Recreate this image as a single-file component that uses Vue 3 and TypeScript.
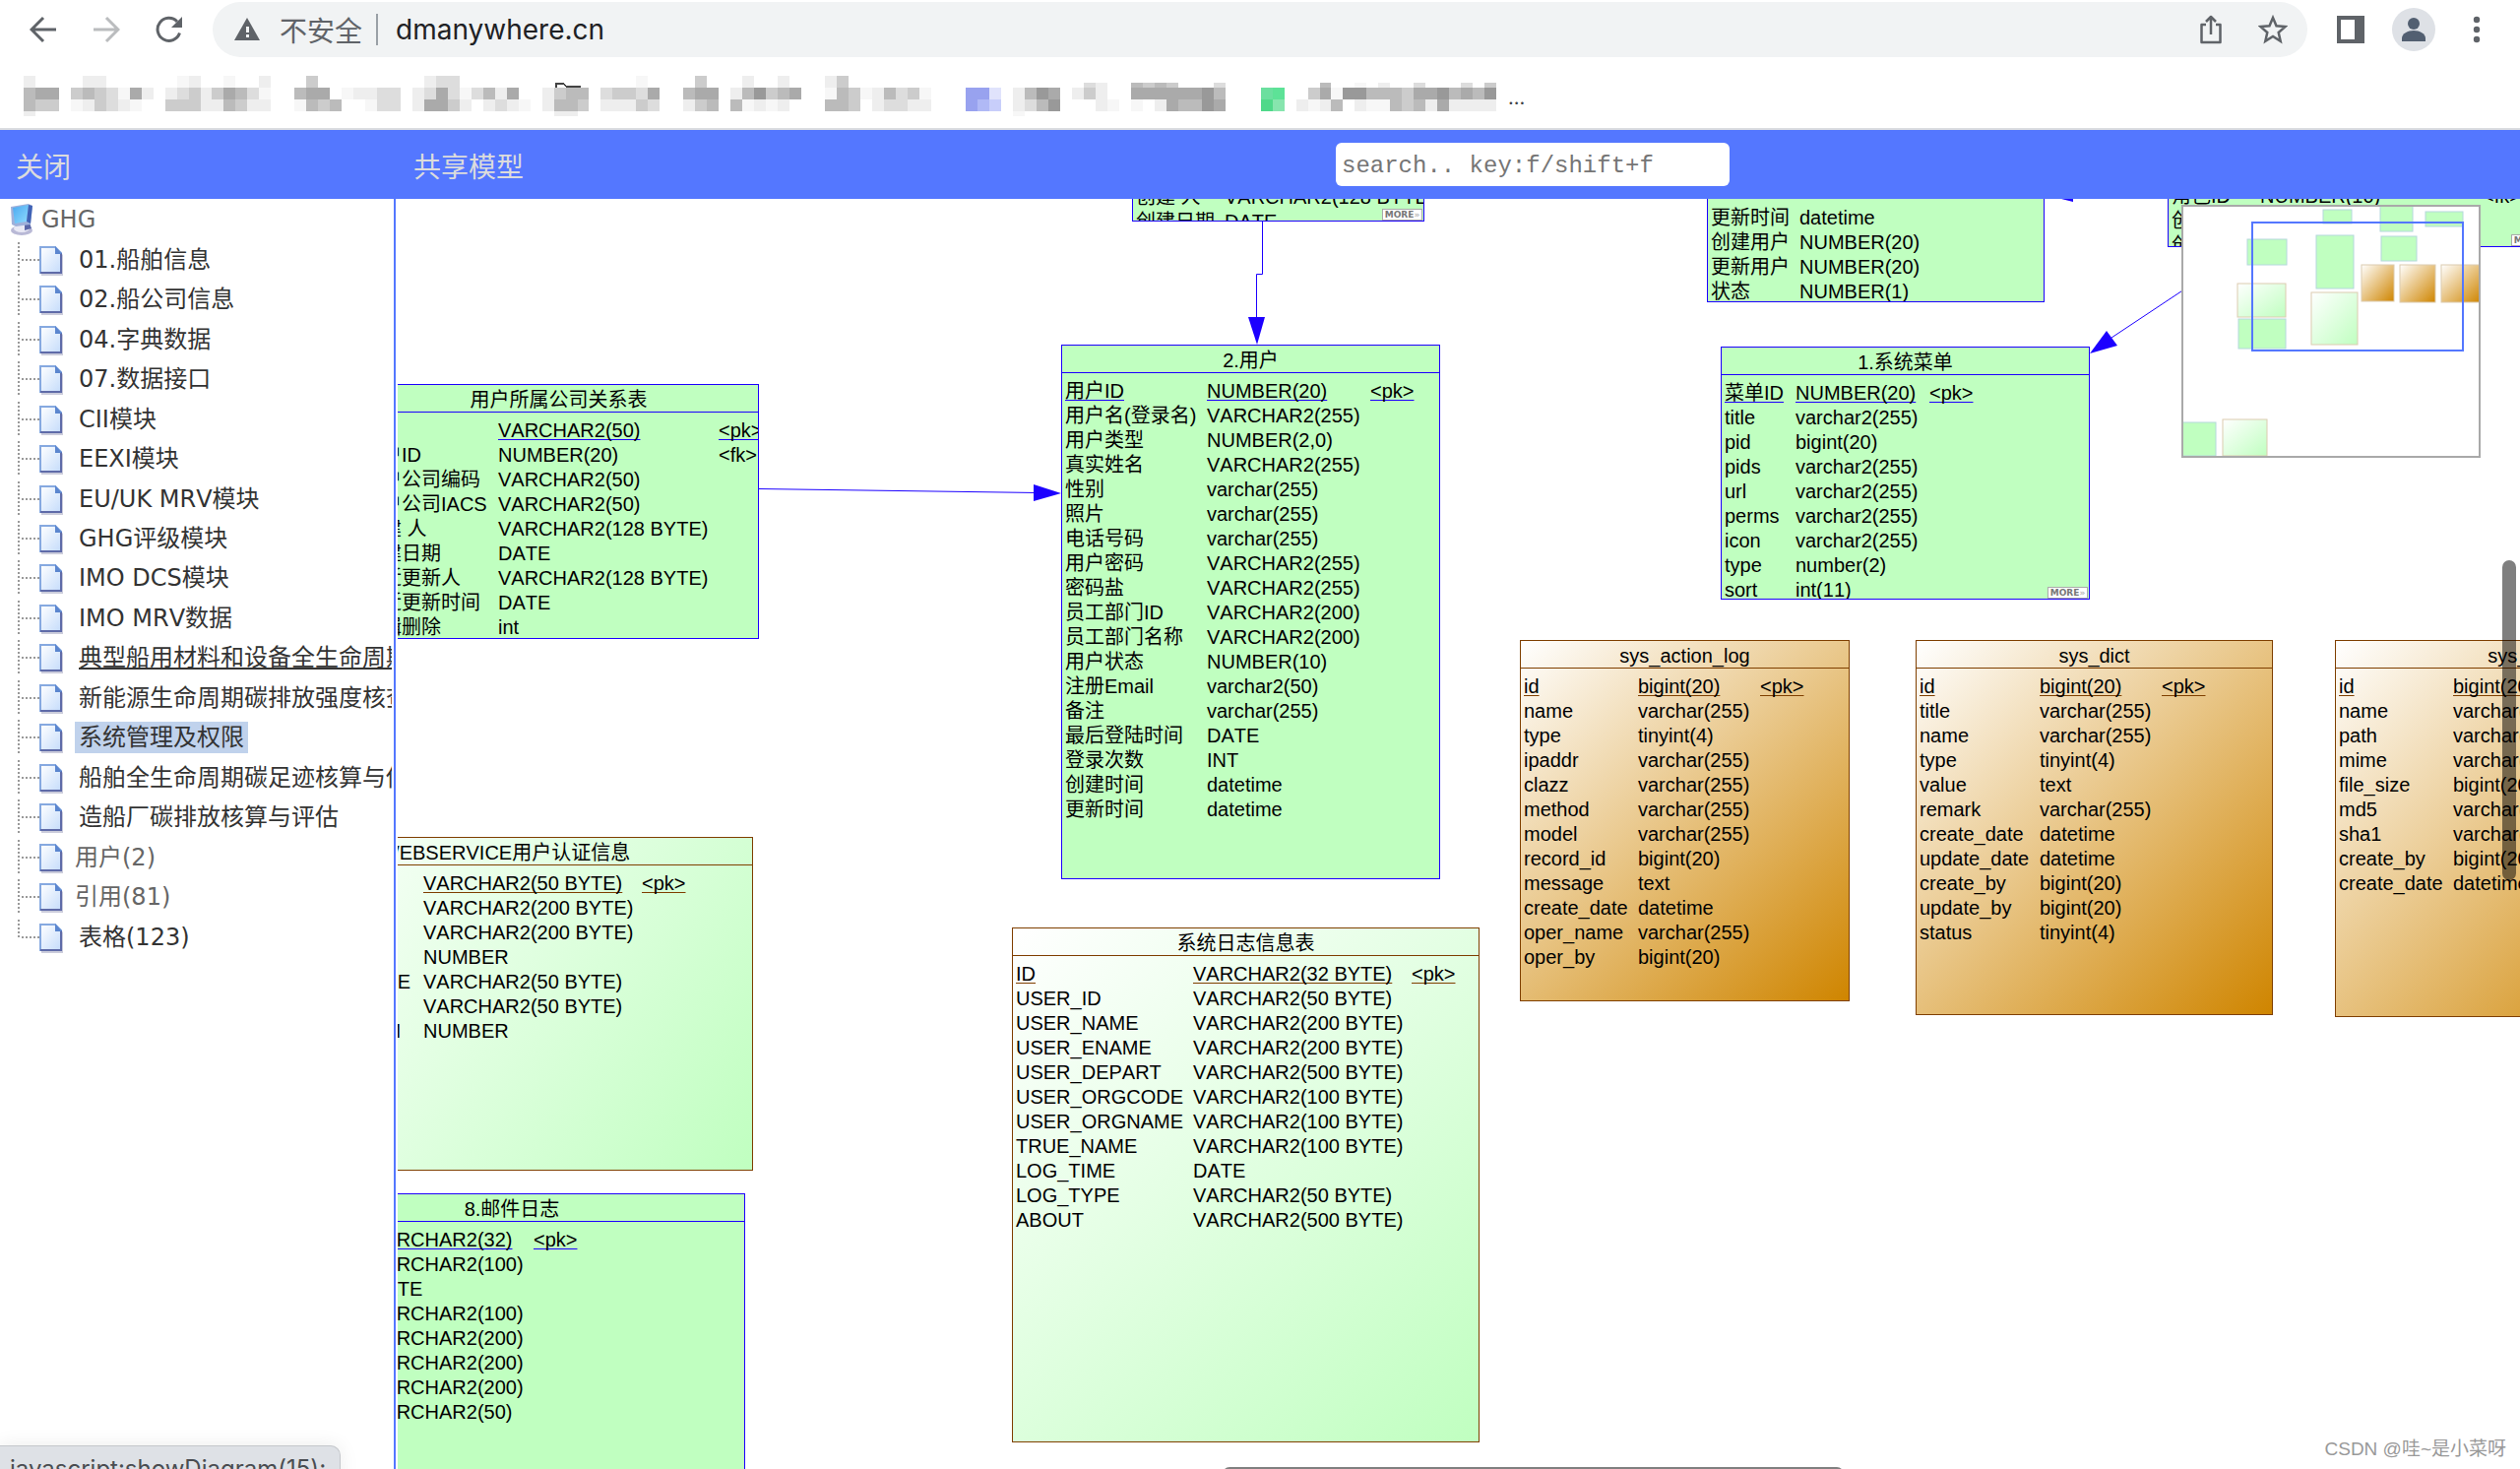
<script setup lang="ts">
interface Entity {
  title: string
  x: number
  y: number
  w: number
  h: number
  nameCol: number
  typeCol: number
  tone: 'green' | 'mint' | 'amber'
  more?: boolean
  rows: string[][]
}

interface TreeItem {
  label: string
  kind: 'link' | 'hover' | 'active' | 'plain'
}

const tree: TreeItem[] = [
  { label: '01.船舶信息', kind: 'link' },
  { label: '02.船公司信息', kind: 'link' },
  { label: '04.字典数据', kind: 'link' },
  { label: '07.数据接口', kind: 'link' },
  { label: 'CII模块', kind: 'link' },
  { label: 'EEXI模块', kind: 'link' },
  { label: 'EU/UK MRV模块', kind: 'link' },
  { label: 'GHG评级模块', kind: 'link' },
  { label: 'IMO DCS模块', kind: 'link' },
  { label: 'IMO MRV数据', kind: 'link' },
  { label: '典型船用材料和设备全生命周期', kind: 'hover' },
  { label: '新能源生命周期碳排放强度核查', kind: 'link' },
  { label: '系统管理及权限', kind: 'active' },
  { label: '船舶全生命周期碳足迹核算与估', kind: 'link' },
  { label: '造船厂碳排放核算与评估', kind: 'link' },
  { label: '用户(2)', kind: 'plain' },
  { label: '引用(81)', kind: 'plain' },
  { label: '表格(123)', kind: 'link' },
]

const entities: Entity[] = [
  {
    title: '用户所属公司关系表', x: -40, y: 188, w: 407, h: 259, nameCol: 138, typeCol: 224, tone: 'green',
    rows: [
      ['ID', 'VARCHAR2(50)', '<pk>'], ['用户ID', 'NUMBER(20)', '<fk>'], ['用户公司编码', 'VARCHAR2(50)'],
      ['用户公司IACS', 'VARCHAR2(50)'], ['创建 人', 'VARCHAR2(128 BYTE)'], ['创建日期', 'DATE'],
      ['最近更新人', 'VARCHAR2(128 BYTE)'], ['最近更新时间', 'DATE'], ['逻辑删除', 'int'],
    ],
  },
  {
    title: 'WEBSERVICE用户认证信息', x: -142, y: 648, w: 503, h: 339, nameCol: 164, typeCol: 222, tone: 'mint',
    rows: [
      ['ID', 'VARCHAR2(50 BYTE)', '<pk>'], ['', 'VARCHAR2(200 BYTE)'], ['', 'VARCHAR2(200 BYTE)'], ['', 'NUMBER'],
      ['SERVICE_TYPE', 'VARCHAR2(50 BYTE)'], ['', 'VARCHAR2(50 BYTE)'], ['ACCESS_ITEM', 'NUMBER'],
    ],
  },
  {
    title: '8.邮件日志', x: -121, y: 1010, w: 474, h: 400, nameCol: 89, typeCol: 166, tone: 'green',
    rows: [
      ['ID', 'VARCHAR2(32)', '<pk>'], ['', 'VARCHAR2(100)'], ['', 'DATE'], ['', 'VARCHAR2(100)'],
      ['', 'VARCHAR2(200)'], ['', 'VARCHAR2(200)'], ['', 'VARCHAR2(200)'], ['', 'VARCHAR2(50)'],
    ],
  },
  {
    title: '2.用户', x: 674, y: 148, w: 385, h: 543, nameCol: 144, typeCol: 166, tone: 'green',
    rows: [
      ['用户ID', 'NUMBER(20)', '<pk>'], ['用户名(登录名)', 'VARCHAR2(255)'], ['用户类型', 'NUMBER(2,0)'],
      ['真实姓名', 'VARCHAR2(255)'], ['性别', 'varchar(255)'], ['照片', 'varchar(255)'], ['电话号码', 'varchar(255)'],
      ['用户密码', 'VARCHAR2(255)'], ['密码盐', 'VARCHAR2(255)'], ['员工部门ID', 'VARCHAR2(200)'],
      ['员工部门名称', 'VARCHAR2(200)'], ['用户状态', 'NUMBER(10)'], ['注册Email', 'varchar2(50)'],
      ['备注', 'varchar(255)'], ['最后登陆时间', 'DATE'], ['登录次数', 'INT'], ['创建时间', 'datetime'], ['更新时间', 'datetime'],
    ],
  },
  {
    title: '', x: 746, y: -49, w: 297, h: 72, nameCol: 90, typeCol: 190, tone: 'green', more: true,
    rows: [['创建 人', 'VARCHAR2(128 BYTE)'], ['创建日期', 'DATE']],
  },
  {
    title: '', x: 1330, y: -53, w: 343, h: 158, nameCol: 90, typeCol: 190, tone: 'green',
    rows: [['', ''], ['更新时间', 'datetime'], ['创建用户', 'NUMBER(20)'], ['更新用户', 'NUMBER(20)'], ['状态', 'NUMBER(1)']],
  },
  {
    title: '1.系统菜单', x: 1344, y: 150, w: 375, h: 257, nameCol: 72, typeCol: 136, tone: 'green', more: true,
    rows: [
      ['菜单ID', 'NUMBER(20)', '<pk>'], ['title', 'varchar2(255)'], ['pid', 'bigint(20)'], ['pids', 'varchar2(255)'],
      ['url', 'varchar2(255)'], ['perms', 'varchar2(255)'], ['icon', 'varchar2(255)'], ['type', 'number(2)'], ['sort', 'int(11)'],
    ],
  },
  {
    title: '', x: 1798, y: -50, w: 392, h: 99, nameCol: 90, typeCol: 226, tone: 'green', more: true,
    rows: [['角色ID', 'NUMBER(10)', '<fk>'], ['创建时间', ''], ['创建用户', '']],
  },
  {
    title: '系统日志信息表', x: 624, y: 740, w: 475, h: 523, nameCol: 180, typeCol: 222, tone: 'mint',
    rows: [
      ['ID', 'VARCHAR2(32 BYTE)', '<pk>'], ['USER_ID', 'VARCHAR2(50 BYTE)'], ['USER_NAME', 'VARCHAR2(200 BYTE)'],
      ['USER_ENAME', 'VARCHAR2(200 BYTE)'], ['USER_DEPART', 'VARCHAR2(500 BYTE)'], ['USER_ORGCODE', 'VARCHAR2(100 BYTE)'],
      ['USER_ORGNAME', 'VARCHAR2(100 BYTE)'], ['TRUE_NAME', 'VARCHAR2(100 BYTE)'], ['LOG_TIME', 'DATE'],
      ['LOG_TYPE', 'VARCHAR2(50 BYTE)'], ['ABOUT', 'VARCHAR2(500 BYTE)'],
    ],
  },
  {
    title: 'sys_action_log', x: 1140, y: 448, w: 335, h: 367, nameCol: 116, typeCol: 124, tone: 'amber',
    rows: [
      ['id', 'bigint(20)', '<pk>'], ['name', 'varchar(255)'], ['type', 'tinyint(4)'], ['ipaddr', 'varchar(255)'],
      ['clazz', 'varchar(255)'], ['method', 'varchar(255)'], ['model', 'varchar(255)'], ['record_id', 'bigint(20)'],
      ['message', 'text'], ['create_date', 'datetime'], ['oper_name', 'varchar(255)'], ['oper_by', 'bigint(20)'],
    ],
  },
  {
    title: 'sys_dict', x: 1542, y: 448, w: 363, h: 381, nameCol: 122, typeCol: 124, tone: 'amber',
    rows: [
      ['id', 'bigint(20)', '<pk>'], ['title', 'varchar(255)'], ['name', 'varchar(255)'], ['type', 'tinyint(4)'],
      ['value', 'text'], ['remark', 'varchar(255)'], ['create_date', 'datetime'], ['update_date', 'datetime'],
      ['create_by', 'bigint(20)'], ['update_by', 'bigint(20)'], ['status', 'tinyint(4)'],
    ],
  },
  {
    title: 'sys_file', x: 1968, y: 448, w: 377, h: 383, nameCol: 116, typeCol: 124, tone: 'amber',
    rows: [
      ['id', 'bigint(20)', '<pk>'], ['name', 'varchar(255)'], ['path', 'varchar(255)'], ['mime', 'varchar(255)'],
      ['file_size', 'bigint(20)'], ['md5', 'varchar(255)'], ['sha1', 'varchar(255)'], ['create_by', 'bigint(20)'], ['create_date', 'datetime'],
    ],
  },
]

function boxStyle(e: Entity) {
  const style: Record<string, string> = {
    left: e.x + 'px', top: e.y + 'px', width: e.w + 'px', height: e.h + 'px',
  }
  if (e.tone !== 'green') {
    const angle = Math.round(90 + (Math.atan2(e.h, e.w) * 180) / Math.PI)
    style.background = `linear-gradient(${angle}deg, #fff, ${e.tone === 'amber' ? '#cf8500' : '#c0ffc0'})`
  }
  return style
}

// Overview thumbnails: x, y, width, height, fill
const thumbs: [number, number, number, number, string][] = [
  [144, 5, 29, 14, 'green'], [202, 1, 33, 26, 'green'], [248, 7, 38, 15, 'green'],
  [67, 35, 40, 26, 'green'], [137, 31, 38, 54, 'green'], [203, 32, 36, 25, 'green'],
  [183, 61, 33, 37, 'amber'], [222, 61, 36, 38, 'amber'], [264, 61, 40, 38, 'amber'],
  [57, 80, 49, 34, 'mint'], [58, 116, 48, 30, 'green'], [132, 89, 47, 53, 'mint'],
  [0, 221, 35, 34, 'green'], [42, 218, 45, 37, 'mint'],
]

// Pixelated bookmark bar: one hex digit of grey per cell
const mosaicRows: { y: number; h: number; cells: string }[] = [
  { y: 0, h: 12, cells: 'e....ee......fe..f..e...c.........edd...............f....c...e..e...ec' },
  { y: 7, h: 5, cells: '..........................................................................................de..bcbc...d........b..f.e..d...d.c' },
  { y: 12, h: 12, cells: 'baa.cbcdfae.edcecabdf..baa.feedd.edadfdbea..ecbb.dccda..baa.eb9cba..fbcfebdcf.......eb9a.ece..aaaaaa9b.......caf99bbbcaa9bab9' },
  { y: 24, h: 12, cells: 'bcc.fecdef..ccceebcee..fbcb..fdd.eaace.edef.ebbc.eeecd..ecb.bfefe...bbc.eddee.......edb9...ef.f.eabb9a......efeb.effbcbeaeeee' },
  { y: 36, h: 5, cells: 'e............................................ee.....................................f' },
]
const mosaic = mosaicRows.flatMap((row) =>
  [...row.cells].flatMap((c, i) => (c === '.' ? [] : [{ x: i * 12, y: row.y, h: row.h, fill: c === 'f' ? '#f7f7f7' : `#${c}${c}${c}` }])),
)
const tinted = [
  { x: 960, y: 12, fill: '#98a2ef' }, { x: 972, y: 12, fill: '#98a2ef' }, { x: 984, y: 12, fill: '#e0e3fc' },
  { x: 960, y: 24, fill: '#98a2ef' }, { x: 972, y: 24, fill: '#b0b9f6' }, { x: 984, y: 24, fill: '#c8cefa' },
  { x: 1260, y: 12, fill: '#6bdf9f' }, { x: 1272, y: 12, fill: '#5de297' },
  { x: 1260, y: 24, fill: '#50d98a' }, { x: 1272, y: 24, fill: '#87e5ae' },
]
</script>

<template>
  <div class="window">
    <nav class="toolbar" aria-label="浏览器">
      <button class="icon-btn back" aria-label="后退">
        <svg width="28" height="28" viewBox="0 0 28 28"><path d="M27 14H3M14 2 2 14l12 12" fill="none" stroke="#5f6368" stroke-width="3" /></svg>
      </button>
      <button class="icon-btn forward" aria-label="前进">
        <svg width="28" height="28" viewBox="0 0 28 28"><path d="M1 14h24M14 2l12 12-12 12" fill="none" stroke="#babcbe" stroke-width="3" /></svg>
      </button>
      <button class="icon-btn reload" aria-label="刷新">
        <svg width="28" height="28" viewBox="0 0 28 28"><path d="M24.500 17.500A11.500 11.500 0 1 1 22 6" fill="none" stroke="#5f6368" stroke-width="3" /><path d="M27 1v11H16z" fill="#5f6368" /></svg>
      </button>
      <div class="omnibox">
        <svg class="warn" width="26" height="24" viewBox="0 0 26 24"><path d="M13 0 26 23H0z" fill="#5f6368" /><path d="M12 9h3v6h-3zM12 17h3v3h-3z" fill="#f1f3f4" /></svg>
        <span class="insecure">不安全</span>
        <span class="divider"></span>
        <span class="url">dmanywhere.cn</span>
        <button class="icon-btn share" aria-label="分享">
          <svg width="28" height="30" viewBox="0 0 28 30"><path d="M9 10H4.500v18h19V10H19M14 20V3M9 7l5-5 5 5" fill="none" stroke="#5f6368" stroke-width="2.500" stroke-linejoin="round" /></svg>
        </button>
        <button class="icon-btn star" aria-label="收藏">
          <svg width="30" height="30" viewBox="0 0 30 30"><path d="m15 3 3.500 8.300 9 .8-6.800 5.900 2 8.800L15 22l-7.700 4.800 2-8.800-6.800-5.900 9-.8z" fill="none" stroke="#5f6368" stroke-width="2.500" /></svg>
        </button>
      </div>
      <button class="icon-btn panel" aria-label="侧边栏">
        <svg width="28" height="28" viewBox="0 0 28 28"><path d="M0 0h28v28H0zM4 4v20h14V4z" fill="#5f6368" fill-rule="evenodd" /></svg>
      </button>
      <button class="icon-btn avatar" aria-label="用户">
        <svg width="44" height="44" viewBox="0 0 44 44"><circle cx="22" cy="22" r="22" fill="#dee1e6" /><circle cx="22" cy="16" r="6" fill="#525f71" /><path d="M10 34v-3c0-5 6-8 12-8s12 3 12 8v3z" fill="#525f71" /></svg>
      </button>
      <button class="icon-btn menu" aria-label="菜单">
        <svg width="8" height="28" viewBox="0 0 8 28"><g fill="#5f6368"><circle cx="4" cy="4" r="3.200" /><circle cx="4" cy="14" r="3.200" /><circle cx="4" cy="24" r="3.200" /></g></svg>
      </button>
    </nav>

    <div class="bookmarks">
      <svg width="1508" height="42" viewBox="0 0 1512 42" preserveAspectRatio="none" shape-rendering="crispEdges">
        <rect v-for="(m, i) in mosaic" :key="i" :x="m.x" :y="m.y" width="12" :height="m.h" :fill="m.fill" />
        <rect v-for="(m, i) in tinted" :key="'t' + i" :x="m.x" :y="m.y" width="12" height="12" :fill="m.fill" />
        <path d="M542 12V8h8l3 3h14" fill="none" stroke="#444" stroke-width="2" />
      </svg>
      <span class="dots">...</span>
    </div>

    <header class="appbar">
      <a class="close" href="#">关闭</a>
      <a class="share-model" href="#">共享模型</a>
      <input class="search" type="text" aria-label="search" placeholder="search.. key:f/shift+f" />
    </header>

    <main class="body">
      <aside class="sidebar">
        <ul class="tree">
          <li class="root">
            <svg width="24" height="34" viewBox="0 0 24 34">
              <defs><linearGradient id="scr" x1="0" y1="0" x2="1" y2="1"><stop offset="0" stop-color="#4aa8f0" /><stop offset="1" stop-color="#8fdcff" /></linearGradient></defs>
              <ellipse cx="12" cy="28" rx="11" ry="5" fill="#b9b9d6" /><ellipse cx="12" cy="26" rx="8" ry="4" fill="#e9e9f5" />
              <path d="m15 22 5-2 2 6-7 2z" fill="#5a66a8" />
              <path d="M1 4 19 1l4 2-2 19-15 2-4-2z" fill="#9fb0da" /><path d="M3 5 19 2l-2 17-12 2z" fill="url(#scr)" /><path d="m19 2 4 1-2 18-4-2z" fill="#3f62b5" />
            </svg>
            <span class="root-label">GHG</span>
          </li>
          <li v-for="(item, i) in tree" :key="item.label" class="node">
            <svg class="twig" width="64" height="36" viewBox="0 0 64 36">
              <path :d="i === tree.length - 1 ? 'M19 0V18' : 'M19 0V35'" stroke="#999" stroke-width="2" stroke-dasharray="2 2" />
              <path d="M22 18H40" stroke="#999" stroke-width="2" stroke-dasharray="2 2" />
              <path d="M42 6H57L64 13V34H42z" fill="#8b8fb0" opacity=".45" />
              <path d="M41 5H56L62 11V31H41z" fill="url(#page)" stroke="#86a9e0" stroke-width="2" />
              <path d="M62 11V31H41" fill="none" stroke="#5f6ba8" stroke-width="2" />
              <path d="M56 4V12H63z" fill="#5b86cf" />
              <defs><linearGradient id="page" x1="0" y1="0" x2="1" y2="1"><stop offset="0" stop-color="#fff" /><stop offset="1" stop-color="#c5dcfb" /></linearGradient></defs>
            </svg>
            <span v-if="item.kind === 'plain'" class="plain">{{ item.label }}</span>
            <a v-else href="#" class="leaf" :class="item.kind">{{ item.label }}</a>
          </li>
        </ul>
      </aside>

      <section class="canvas">
        <div v-for="(e, i) in entities" :key="i" class="entity" :class="e.tone" :style="boxStyle(e)">
          <table>
            <caption>{{ e.title }}</caption>
            <colgroup>
              <col :style="{ width: e.nameCol + 'px' }" />
              <col :style="{ width: e.typeCol + 'px' }" />
              <col />
            </colgroup>
            <tbody>
              <tr v-for="(r, j) in e.rows" :key="j" :class="{ pk: r[2] === '<pk>' }">
                <td><span>{{ r[0] }}</span></td>
                <td><span>{{ r[1] }}</span></td>
                <td><span>{{ r[2] }}</span></td>
              </tr>
            </tbody>
          </table>
          <button v-if="e.more" class="more">MORE<i>»</i></button>
        </div>

        <svg class="links" width="2156" height="700" viewBox="0 0 2156 700">
          <g stroke="#1c00ff" stroke-width="1" fill="none">
            <path d="M367 294.500 650 298.500" />
            <path d="M878.500 23V76.500H872.500V122" />
            <path d="M1741 141 1860 62" />
          </g>
          <g fill="#1c00ff">
            <path d="M646 290v17l28-8z" />
            <path d="M864 120h17l-8 28z" />
            <path d="M1719 157 1736 134 1747 149z" />
            <path d="M1690 0h12v3z" />
          </g>
        </svg>

        <svg class="overview" width="304" height="257" viewBox="0 0 304 257">
          <defs>
            <linearGradient id="mint" x1="0" y1="0" x2="1" y2="1"><stop offset="0" stop-color="#fff" /><stop offset="1" stop-color="#c0ffc0" /></linearGradient>
            <linearGradient id="amber" x1="0" y1="0" x2="1" y2="1"><stop offset="0" stop-color="#fff" /><stop offset="1" stop-color="#cf8500" /></linearGradient>
          </defs>
          <rect width="304" height="257" fill="#fff" />
          <rect
            v-for="(t, i) in thumbs" :key="i" :x="t[0]" :y="t[1]" :width="t[2]" :height="t[3]"
            :fill="t[4] === 'green' ? '#c0ffc0' : `url(#${t[4]})`" :stroke="t[4] === 'green' ? '#b4d8dc' : '#dccbb0'"
          />
          <rect x="72" y="18" width="214" height="130" fill="none" stroke="#5477ff" stroke-width="2" />
          <rect x="1" y="1" width="302" height="255" fill="none" stroke="#a9a9a9" stroke-width="2" />
        </svg>

        <div class="scroll-v"></div>
        <div class="scroll-h"></div>
        <span class="watermark">CSDN @哇~是小菜呀</span>
      </section>
      <div class="status">javascript:showDiagram(15);</div>
    </main>
  </div>
</template>

<style>
body {
  margin: 0;
  background: #fff;
}
</style>

<style scoped>
.window {
  display: flex;
  flex-direction: column;
  height: 100vh;
  overflow: hidden;
  font-family: "Liberation Sans", "Noto Sans CJK SC", sans-serif;
  white-space: nowrap;
}
button {
  padding: 0;
  border: 0;
  background: none;
  font: inherit;
}
.icon-btn {
  display: flex;
  flex: none;
}
.toolbar {
  display: flex;
  flex: none;
  align-items: center;
  height: 60px;
  padding: 0 40px 0 30px;
  font-family: Inter, "Noto Sans CJK SC", sans-serif;
}
.forward {
  margin-left: 36px;
}
.reload {
  margin: 0 30px 0 36px;
}
.omnibox {
  display: flex;
  flex: 1;
  align-items: center;
  height: 56px;
  padding: 0 20px 0 22px;
  border-radius: 28px;
  background: #f1f3f4;
  font-size: 28px;
}
.insecure {
  margin: 0 14px 0 20px;
  color: #5f6368;
}
.divider {
  width: 2px;
  height: 32px;
  background: #9aa0a6;
}
.url {
  flex: 1;
  margin-left: 18px;
  color: #202124;
}
.star {
  margin-left: 34px;
}
.panel {
  margin-left: 30px;
}
.avatar {
  margin: 0 38px 0 28px;
}
.bookmarks {
  display: flex;
  flex: none;
  height: 53px;
  padding: 17px 0 0 24px;
  border-bottom: 2px solid #dadce0;
}
.dots {
  font: 20px/44px Inter, sans-serif;
  color: #3c4043;
}
.appbar {
  display: flex;
  flex: none;
  align-items: center;
  height: 70px;
  padding-right: 803px;
  background: #5477ff;
  font-size: 28px;
}
.appbar a {
  padding-top: 2px;
  color: #dcdcdc;
  text-decoration: none;
}
.appbar .close {
  width: 404px;
  padding-left: 16px;
}
.share-model {
  flex: 1;
}
.search {
  box-sizing: border-box;
  width: 400px;
  height: 44px;
  padding: 2px 6px 0;
  border: 0;
  border-radius: 6px;
  background: #fff;
  font: 24px "Liberation Mono", monospace;
}
.search::placeholder {
  color: #757575;
}
.body {
  position: relative;
  display: flex;
  flex: 1;
  min-height: 0;
}
.sidebar {
  box-sizing: border-box;
  flex: none;
  width: 402px;
  padding: 1px 2px 0 0;
  border-right: 2px solid #5477ff;
}
.tree {
  display: grid;
  grid-auto-rows: 1fr;
  height: 769px;
  margin: 0;
  padding: 0;
  overflow: hidden;
  list-style: none;
  font: 24px/32px "DejaVu Sans", "Noto Sans CJK SC", sans-serif;
  font-kerning: none;
}
.tree li {
  display: flex;
  align-items: center;
}
.tree .root {
  padding-left: 10px;
}
.root-label {
  margin-left: 8px;
  color: #666;
}
.twig {
  flex: none;
}
.plain {
  margin-left: 12px;
  color: #666;
}
.leaf {
  margin-left: 12px;
  padding: 0 4px;
  color: #333;
  text-decoration: none;
}
.hover {
  text-decoration: underline;
  text-decoration-thickness: 2px;
  text-underline-offset: 2px;
  text-decoration-skip-ink: none;
}
.active {
  background: #c0d2ec;
}
.canvas {
  position: relative;
  flex: 1;
  margin-left: 2px;
  overflow: hidden;
}
.entity {
  position: absolute;
  box-sizing: border-box;
  overflow: hidden;
  border: 1px solid #7f3f00;
  color: #000;
  font-size: 20px;
  font-kerning: none;
}
.green {
  border-color: #1c00ff;
  background: #c0ffc0;
}
.entity table {
  width: 100%;
  padding: 6px 0 0 3px;
  border-spacing: 0;
  table-layout: fixed;
}
.entity caption {
  height: 27px;
  border-bottom: 1px solid #7f3f00;
  line-height: 31px;
}
.green caption {
  border-color: #1c00ff;
}
.entity td {
  height: 25px;
  padding: 0;
  line-height: 25px;
}
.pk span {
  text-decoration: underline 1px #7f3f00;
  text-underline-offset: 2px;
  text-decoration-skip-ink: none;
}
.green .pk span {
  text-decoration-color: #1c00ff;
}
.more {
  position: absolute;
  right: 1px;
  bottom: 0;
  width: 41px;
  height: 12px;
  border: 1px solid #aaa;
  background: #fff;
  color: #777;
  font: bold 9px/10px "DejaVu Sans", sans-serif;
}
.more i {
  color: #bbb;
  font-style: normal;
}
.links {
  position: absolute;
  top: 0;
  left: 0;
}
.overview {
  position: absolute;
  top: 6px;
  right: 40px;
}
.scroll-v {
  position: absolute;
  top: 367px;
  right: 4px;
  width: 14px;
  height: 325px;
  border-radius: 7px;
  background: rgba(0, 0, 0, 0.5);
}
.scroll-h {
  position: absolute;
  bottom: -12px;
  left: 838px;
  width: 631px;
  height: 14px;
  border-radius: 7px;
  background: #808080;
}
.watermark {
  position: absolute;
  right: 14px;
  bottom: 6px;
  color: #999;
  font-size: 19px;
  line-height: 28px;
}
.status {
  position: absolute;
  bottom: -24px;
  left: 0;
  box-sizing: border-box;
  width: 346px;
  height: 48px;
  padding-left: 10px;
  border: 1px solid #c4c7cb;
  border-left: 0;
  border-radius: 0 10px 0 0;
  background: #dee1e6;
  box-shadow: 0 0 20px rgba(0, 0, 0, 0.08);
  color: #4a4d51;
  font: 24px/46px Inter, sans-serif;
}
</style>
